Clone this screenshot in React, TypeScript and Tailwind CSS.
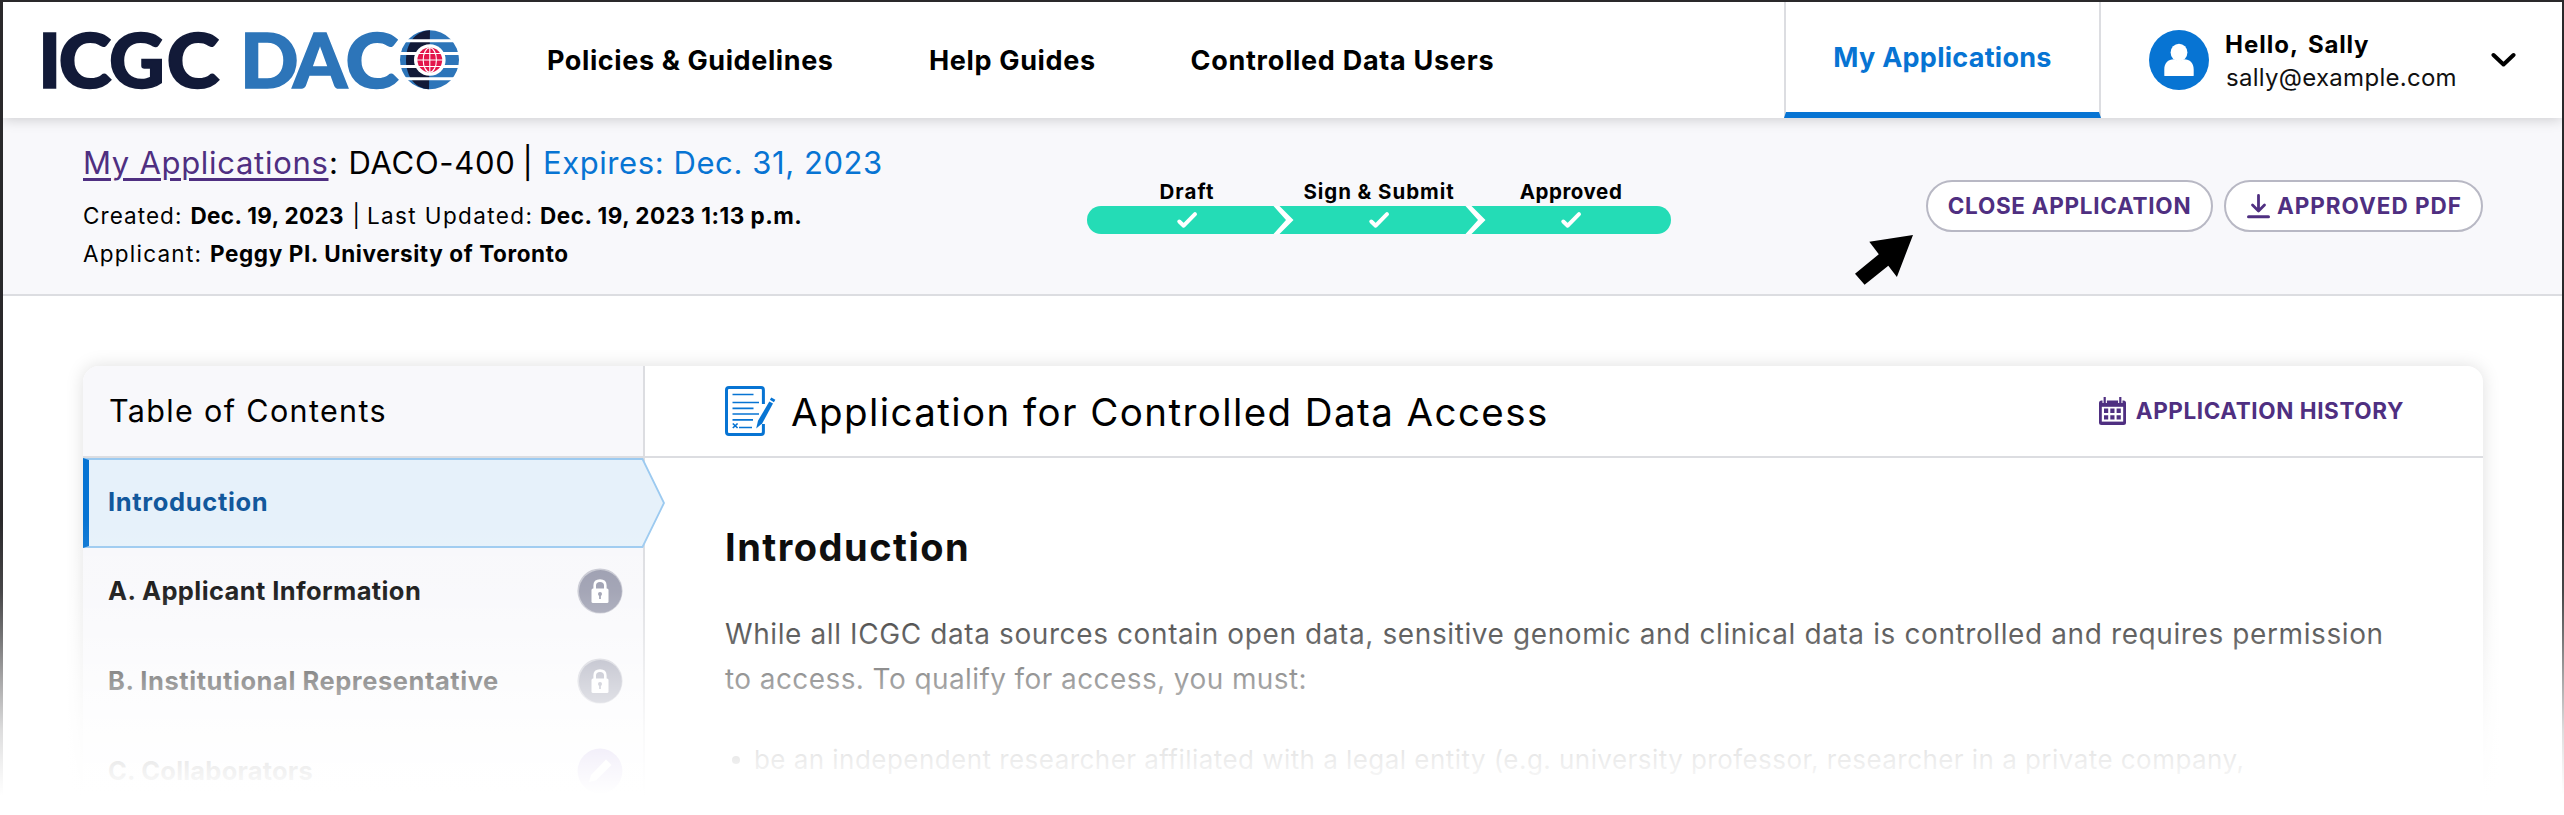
import type { ReactNode } from "react";

function Logo() {
  return (
    <svg className="ml-[27px] h-[112px] w-[434px] shrink-0" viewBox="30 4 434 112">
      <g fontFamily="Lato" fontWeight={900} fontSize={77} strokeWidth={1.6}>
        <text y={87.5} fill="#121a38" stroke="#121a38">
          <tspan x={38}>I</tspan>
          <tspan x={58.5} textLength={53} lengthAdjust="spacingAndGlyphs">C</tspan>
          <tspan x={109}>G</tspan>
          <tspan x={166.5} textLength={53} lengthAdjust="spacingAndGlyphs">C</tspan>
        </text>
        <text y={87.5} fill="#2d75b9" stroke="#2d75b9">
          <tspan x={240}>D</tspan>
          <tspan x={293}>A</tspan>
          <tspan x={345.5} textLength={53} lengthAdjust="spacingAndGlyphs">C</tspan>
        </text>
      </g>
      <circle cx="429.5" cy="59.8" r="29.5" fill="#2d75b9" />
      <path d="M430 30.3 C414 31 406 45 406 60 C406 75 414 88.5 429 89.3 Z" fill="#121a38" />
      <path d="M399 40.8H460M399 53.5H460M399 66.4H460M399 78.8H460" stroke="#fff" strokeWidth="3" />
      <circle cx="429.8" cy="60" r="15.8" fill="#fff" />
      <circle cx="429.8" cy="60" r="12.4" fill="#e3164b" />
      <g stroke="#fff" strokeWidth="1.1" fill="none">
        <path d="M429.8 47V73M417 60H443M419 53.5H441M419 66.5H441" />
        <ellipse cx="429.8" cy="60" rx="6.6" ry="12.2" />
      </g>
    </svg>
  );
}

function Avatar() {
  return (
    <svg className="size-[60px] shrink-0" viewBox="0 0 60 60">
      <circle cx="30" cy="30" r="30" fill="#0774d3" />
      <ellipse cx="30" cy="22.5" rx="8.4" ry="8.8" fill="#fff" />
      <path d="M15.3 45.5V39.5C15.3 33 19 29.5 25 29.3C28 31.2 32 31.2 35 29.3C41 29.5 44.7 33 44.7 39.5V45.5Q44.7 46 44 46H16Q15.3 46 15.3 45.5Z" fill="#fff" />
    </svg>
  );
}

function Progress() {
  return (
    <div className="w-[584px] shrink-0">
      <div className="flex h-[22px] text-center text-[20.5px] leading-[23px] font-bold">
        <span className="w-[200px] tracking-[1.1px]">Draft</span>
        <span className="w-[184px] tracking-[0.93px] whitespace-nowrap">Sign &amp; Submit</span>
        <span className="w-[200px] tracking-[0.56px]">Approved</span>
      </div>
      <svg className="mt-[4px] block h-[28px] w-[584px]" viewBox="0 0 584 28">
        <rect width="584" height="28" rx="14" fill="#24dcb6" />
        <path d="M186.5 0H192.5L206.5 14L192.5 28H186.5L199 14ZM378.5 0H384.5L398.5 14L384.5 28H378.5L391 14Z" fill="#fff" />
        <g fill="none" stroke="#fff" strokeWidth="4" strokeLinecap="round" strokeLinejoin="round">
          <path d="M92.3 15.5L96.7 19.7L108 8.2" />
          <path d="M284.3 15.5L288.7 19.7L300 8.2" />
          <path d="M476.3 15.5L480.7 19.7L492 8.2" />
        </g>
      </svg>
    </div>
  );
}

function DocumentIcon() {
  return (
    <svg className="h-[50px] w-[51px] shrink-0" viewBox="0 0 51 50" fill="none" stroke="#0774d3">
      <path d="M38.4 18V4Q38.4 1.5 36 1.5H4Q1.5 1.5 1.5 4V46Q1.5 48.5 4 48.5H36Q38.4 48.5 38.4 46V38" strokeWidth="3" />
      <path d="M7.5 8.5H28.5M7.5 16.5H34M7.5 22.3H28.5M7.5 28H34M7.5 33.8H28M14 41.5H27" strokeWidth="1.7" />
      <path d="M7.8 37.5L12.6 42M12.6 37.5L7.8 42" strokeWidth="1.7" />
      <path d="M44.3 15.5L48 17.6L37.3 37.2L31.2 42.4L33 34.8Z" fill="#0774d3" stroke="none" />
      <path d="M45.6 12.6L49.6 15" strokeWidth="2.8" />
    </svg>
  );
}

function CalendarIcon() {
  return (
    <svg className="h-[28px] w-[27px] shrink-0" viewBox="0 0 27 28">
      <path d="M2.5 3.5H24.5Q27 3.5 27 6V25.5Q27 28 24.5 28H2.5Q0 28 0 25.5V6Q0 3.5 2.5 3.5Z" fill="#4f2f81" />
      <path d="M5.7 0V6M21.3 0V6" stroke="#fff" strokeWidth="4.4" />
      <path d="M5.7 0V6M21.3 0V6" stroke="#4f2f81" strokeWidth="2.2" />
      <rect x="2.8" y="9.8" width="21.4" height="14.8" fill="#fff" />
      <path d="M5 11.6h4.2v4.4H5zM11.3 11.6h4.2v4.4h-4.2zM17.6 11.6h4.2v4.4h-4.2zM5 18.2h4.2v4.4H5zM11.3 18.2h4.2v4.4h-4.2zM17.6 18.2h4.2v4.4h-4.2z" fill="#4f2f81" />
    </svg>
  );
}

function LockBadge() {
  return (
    <svg className="size-[46px] shrink-0" viewBox="0 0 46 46">
      <circle cx="23" cy="23" r="22.6" fill="#c5c6d0" />
      <circle cx="23.4" cy="23.4" r="21.4" fill="#9698ab" />
      <path d="M17.7 22V17.5Q17.7 12.6 23 12.6Q28.3 12.6 28.3 17.5V22" fill="none" stroke="#fff" strokeWidth="2.6" />
      <rect x="14.5" y="20.5" width="17" height="14.6" rx="1.5" fill="#fff" />
      <circle cx="23" cy="26" r="2" fill="#9698ab" />
      <path d="M23 26V31" stroke="#9698ab" strokeWidth="1.8" />
    </svg>
  );
}

function PencilBadge() {
  return (
    <svg className="size-[46px] shrink-0" viewBox="0 0 46 46">
      <circle cx="23" cy="23" r="22.4" fill="#8c6fd0" />
      <path d="M12 34L14 27L29 11.5L34.5 17L19 32.5Z" fill="#fff" />
    </svg>
  );
}

function Section({ children, badge }: { children: ReactNode; badge: ReactNode }) {
  return (
    <div className="flex h-[89.67px] items-center justify-between pr-[20px] pb-[2px] pl-[25px] text-[25.5px] font-bold whitespace-nowrap text-black">
      {children}
      {badge}
    </div>
  );
}

export default function App() {
  return (
    <div className="relative h-[815px] w-[2564px] overflow-hidden bg-white font-['Inter','Liberation_Sans',sans-serif] text-black">
      <div className="flex h-[815px] flex-col overflow-hidden border-t-2 border-r-2 border-l-[3px] border-[#2a292b]">
        <header className="relative z-10 flex h-[116px] shrink-0 items-center bg-white shadow-[0_2px_12px_rgba(0,0,0,0.17)]">
          <Logo />
          <nav className="ml-[83px] flex pt-px text-[27px] leading-[34px] font-bold whitespace-nowrap">
            <a className="w-[382px] tracking-[0.6px]">Policies &amp; Guidelines</a>
            <a className="w-[261.5px] tracking-[0.65px]">Help Guides</a>
            <a className="tracking-[0.72px]">Controlled Data Users</a>
          </nav>
          <div className="ml-auto flex h-full w-[317px] items-center justify-center border-x-2 border-b-6 border-x-[#dcdde1] border-b-[#0774d3] pt-[2px] text-[27px] leading-[34px] font-bold tracking-[0.27px] whitespace-nowrap text-[#0774d3]">
            My Applications
          </div>
          <div className="flex h-full w-[461px] items-center pl-[48px] whitespace-nowrap">
            <Avatar />
            <div className="ml-[16px] w-[266px] pt-[2px]">
              <div className="flex h-[33px] text-[24px] leading-[33px] font-bold">
                <span className="w-[83px] tracking-[1px]">Hello,</span>
                <span className="tracking-[0.77px]">Sally</span>
              </div>
              <div className="h-[33px] pl-px text-[24px] leading-[33px] tracking-[0.28px] text-[#111]">sally@example.com</div>
            </div>
            <svg className="h-[16px] w-[25px]" viewBox="0 0 25 16" fill="none" stroke="#000" strokeWidth="4" strokeLinecap="round" strokeLinejoin="round">
              <path d="M2.5 3L12.5 12.5L22.5 3" />
            </svg>
          </div>
        </header>

        <section className="flex h-[178px] shrink-0 border-b-2 border-[#dcdde1] bg-[#f8f8fb]">
          <div className="w-[1004px] shrink-0 pt-[25px] pl-[80px] whitespace-nowrap">
            <div className="flex h-[40px] text-[31px] leading-[40px]">
              <a className="w-[246px] tracking-[0.7px] text-[#4f2f81]"><span className="underline decoration-[2.5px] underline-offset-[4px]">My Applications</span></a>
              <span className="w-[19.5px]">:</span>
              <span className="w-[174px] tracking-[0.7px]">DACO-400</span>
              <span className="w-[20.5px]">|</span>
              <span className="tracking-[0.58px] text-[#0774d3]">Expires: Dec. 31, 2023</span>
            </div>
            <div className="mt-[14px] flex h-[38px] text-[22.5px] leading-[38px]">
              <span className="w-[107.5px] tracking-[1.06px]">Created:</span>
              <b className="w-[162px] font-bold tracking-[0.35px]">Dec. 19, 2023</b>
              <span className="w-[14.5px]">|</span>
              <span className="w-[173px] tracking-[1.38px]">Last Updated:</span>
              <b className="font-bold tracking-[0.5px]">Dec. 19, 2023 1:13 p.m.</b>
            </div>
            <div className="flex h-[38px] text-[22.5px] leading-[38px]">
              <span className="w-[127px] tracking-[1.24px]">Applicant:</span>
              <b className="font-bold tracking-[0.6px]">Peggy PI. University of Toronto</b>
            </div>
          </div>
          <div className="pt-[62px] pl-[80px]">
            <Progress />
          </div>
          <div className="mr-[79px] ml-auto flex gap-[11px] pt-[62px] text-[22.5px] leading-[48px] font-bold whitespace-nowrap text-[#4f2f81]">
            <button className="h-[52px] w-[287px] rounded-full border-2 border-[#b8b8c4] bg-white text-center tracking-[0.71px]">CLOSE APPLICATION</button>
            <button className="flex h-[52px] w-[259px] items-center rounded-full border-2 border-[#b8b8c4] bg-white pl-[21px]">
              <svg className="h-[25px] w-[23px]" viewBox="0 0 23 25" fill="none" stroke="#4f2f81" strokeLinecap="round" strokeLinejoin="round">
                <path d="M11.5 1.5V16M5.5 11L11.5 17L17.5 11" strokeWidth="2.8" />
                <path d="M1.5 22.8H21.5" strokeWidth="3" />
              </svg>
              <span className="ml-[7px] tracking-[0.97px]">APPROVED PDF</span>
            </button>
          </div>
        </section>

        <main className="mx-[80px] mt-[70px] flex h-[520px] w-[2400px] shrink-0 rounded-t-[16px] bg-white shadow-[0_0_18px_rgba(0,0,0,0.13)]">
          <aside className="w-[562px] shrink-0 rounded-tl-[16px] border-r-2 border-[#dcdde1] bg-[#f8f8fb]">
            <div className="h-[92px] border-b-2 border-[#dcdde1] pl-[26px] text-[30.5px] leading-[90px] tracking-[1.35px]">Table of Contents</div>
            <div className="relative flex h-[89.67px] items-center border-y-2 border-l-6 border-y-[#9ccaf0] border-l-[#0774d3] bg-[#e6f1fa] pb-[2px] pl-[19px] text-[25.5px] font-bold tracking-[0.65px] text-[#12589c]">
              Introduction
              <svg className="absolute -top-[2px] -right-[22px] h-[90px] w-[24px]" viewBox="0 0 24 90">
                <path d="M0 1H2L23 45L2 89H0Z" fill="#e6f1fa" />
                <path d="M0 1H1.5L23 45L1.5 89H0" fill="none" stroke="#9ccaf0" strokeWidth="1.8" />
              </svg>
            </div>
            <Section badge={<LockBadge />}><span className="tracking-[0.39px]">A. Applicant Information</span></Section>
            <Section badge={<LockBadge />}><span className="tracking-[0.56px]">B. Institutional Representative</span></Section>
            <Section badge={<PencilBadge />}><span className="tracking-[0.2px]">C. Collaborators</span></Section>
          </aside>
          <article className="min-w-0 flex-1">
            <div className="flex h-[92px] items-center border-b-2 border-[#dcdde1] pl-[80px] whitespace-nowrap">
              <DocumentIcon />
              <h1 className="ml-[15px] pt-px text-[38.5px] leading-[48px] tracking-[1.42px]">Application for Controlled Data Access</h1>
              <div className="mr-[79px] ml-auto flex items-center text-[22.5px] font-bold text-[#4f2f81]">
                <CalendarIcon />
                <span className="ml-[10px] tracking-[0.59px]">APPLICATION HISTORY</span>
              </div>
            </div>
            <div className="pt-[67px] pl-[80px] whitespace-nowrap">
              <h2 className="text-[38px] leading-[44px] font-bold tracking-[1.49px]">Introduction</h2>
              <p className="mt-[43px] text-[28px] leading-[44.5px] text-[#111]">
                <span className="block tracking-[0.6px]">While all ICGC data sources contain open data, sensitive genomic and clinical data is controlled and requires permission</span>
                <span className="block tracking-[0.41px]">to access. To qualify for access, you must:</span>
              </p>
              <ul className="mt-[37px] text-[26px] leading-[44px] text-[#111]">
                <li className="flex items-center">
                  <span className="mr-[14px] ml-[7px] size-[8px] rounded-full bg-[#111]" />
                  <span className="tracking-[0.45px]">be an independent researcher affiliated with a legal entity (e.g. university professor, researcher in a private company,</span>
                </li>
              </ul>
            </div>
          </article>
        </main>
      </div>

      <svg className="absolute top-[235px] left-[1855px] z-10 h-[50px] w-[58px]" viewBox="1855 235 58 50">
        <path d="M1913 235L1869.3 241.7L1878.8 254.3L1855 273.7L1864.6 284.7L1888.3 265.7L1896.9 277Z" fill="#000" />
      </svg>

      <div className="absolute inset-x-0 top-[520px] z-20 h-[295px] bg-[linear-gradient(to_bottom,rgba(255,255,255,0)_0px,rgba(255,255,255,0.14)_72px,rgba(255,255,255,0.34)_115px,rgba(255,255,255,0.6)_162px,rgba(255,255,255,0.84)_210px,rgba(255,255,255,0.93)_243px,#fff_275px)]" />
    </div>
  );
}
